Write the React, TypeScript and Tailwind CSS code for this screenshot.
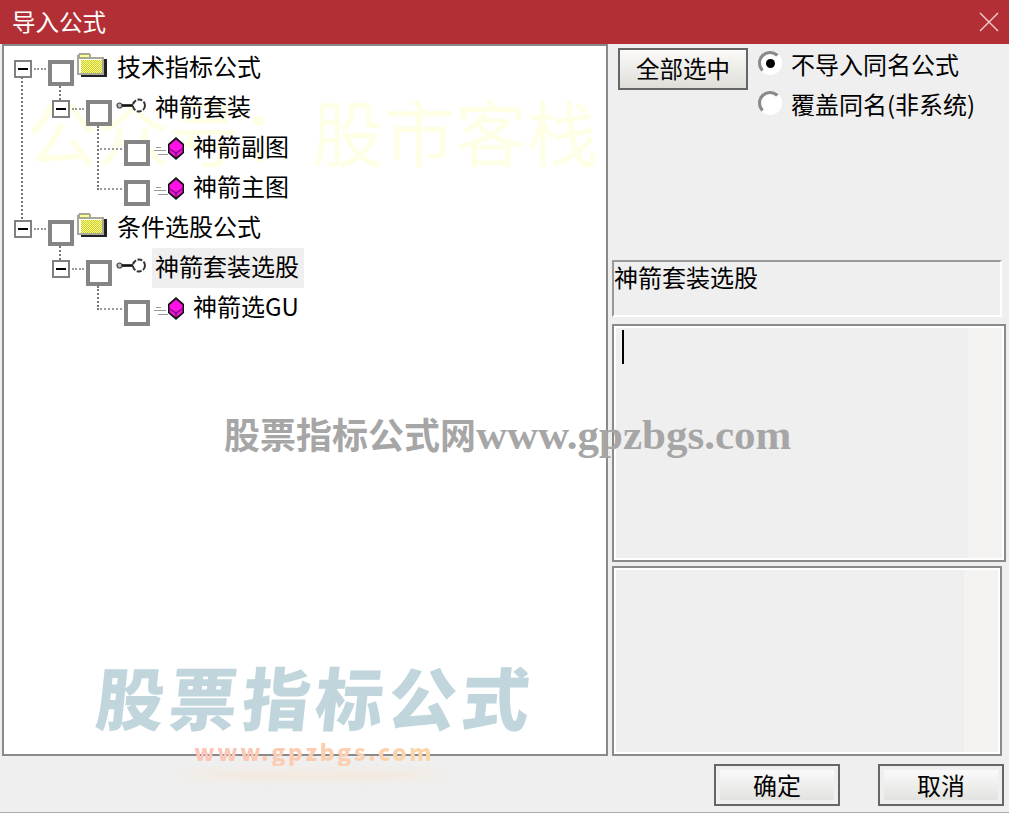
const cjk = { fontFamily: '"Noto Sans CJK SC", "Liberation Sans", sans-serif' };

function Folder() {
  return (
    <svg width="30" height="26" viewBox="0 0 30 26" shapeRendering="crispEdges" className="shrink-0">
      <defs>
        <pattern id="chk" width="2" height="2" patternUnits="userSpaceOnUse">
          <rect width="2" height="2" fill="#ffff66" />
          <rect width="1" height="1" fill="#c8c850" />
          <rect x="1" y="1" width="1" height="1" fill="#c8c850" />
        </pattern>
      </defs>
      <path d="M4 25h26V7h-3v15H4z" fill="#222" />
      <path d="M0 23V3l2-2h10l2 2v2h13v18z" fill="#a8a898" />
      <path d="M2 21V7h23v14z" fill="#fff" />
      <path d="M4 8h21v13H4z" fill="url(#chk)" />
      <path d="M3 3h9v2H3z" fill="#ffff90" />
    </svg>
  );
}

function KeyIcon() {
  return (
    <svg width="30" height="16" viewBox="0 0 30 16" className="shrink-0">
      <circle cx="3.5" cy="7.5" r="2.5" fill="#bbb" stroke="#444" strokeWidth="1.2" />
      <rect x="6" y="6.2" width="11" height="2.6" fill="#111" />
      <circle cx="23" cy="7.5" r="6" fill="#fff" stroke="#333" strokeWidth="2" strokeDasharray="5 1.5" />
    </svg>
  );
}

function DocIcon() {
  return (
    <svg width="32" height="24" viewBox="0 0 32 24" className="shrink-0">
      <path d="M2 10h5v1H2zM0 13h12v1H0zM4 17h10v1H4z" fill="#999" shapeRendering="crispEdges" />
      <path d="M22 0l8 7v9l-8 7-8-7V7z" fill="#111" />
      <path d="M22 2.5l6.5 5.5v7L22 20.5 15.500 15V8z" fill="#ff10e8" />
      <path d="M16 12l6 4 6-4M22 16v4" stroke="#70106a" strokeWidth="1.5" fill="none" />
    </svg>
  );
}

function Expander() {
  return (
    <span className="flex h-[18px] w-[18px] shrink-0 items-center justify-center border-2 border-[#808080] bg-white">
      <span className="h-[2px] w-[10px] bg-black" />
    </span>
  );
}

function Check() {
  return <span className="block h-[26px] w-[26px] shrink-0 border-4 border-[#858585] bg-white" />;
}

type RowProps = {
  kind: 'root' | 'group' | 'leaf';
  label: string;
  selected?: boolean;
  children?: React.ReactNode;
};

function TreeRow({ kind, label, selected, children }: RowProps) {
  return (
    <div className="relative h-10">
      {children}
      {kind === 'root' && (
        <div className="flex items-start pl-[10px]">
          <span className="mt-[13px]"><Expander /></span>
          <span className="mt-[13px] ml-[16px]"><Check /></span>
          <span className="mt-[5px] ml-[3px]"><Folder /></span>
          <span className="ml-[10px] text-[24px] leading-[38px] text-black">{label}</span>
        </div>
      )}
      {kind === 'group' && (
        <div className="flex items-start pl-[48px]">
          <span className="mt-[13px]"><Expander /></span>
          <span className="mt-[13px] ml-[16px]"><Check /></span>
          <span className="mt-[11px] ml-[4px]"><KeyIcon /></span>
          <span className={`mt-px ml-[6px] pr-[5px] pb-1 pl-[3px] text-[24px] leading-[36px] text-black ${selected ? 'bg-[#efefef]' : ''}`}>{label}</span>
        </div>
      )}
      {kind === 'leaf' && (
        <div className="flex items-start pl-[120px]">
          <span className="mt-[13px]"><Check /></span>
          <span className="mt-[10px] ml-[4px]"><DocIcon /></span>
          <span className="ml-[7px] text-[24px] leading-[38px] text-black">{label}</span>
        </div>
      )}
    </div>
  );
}

const dotV = 'absolute w-0 border-l-2 border-dotted border-[#777]';
const dotH = 'absolute h-0 border-t-2 border-dotted border-[#999]';

function Radio({ checked, label }: { checked?: boolean; label: string }) {
  return (
    <div className="flex h-10 items-center">
      <span className="-mt-[2px] flex h-[24px] w-[24px] items-center justify-center rounded-full border-[3px] border-t-[#8a8a8a] border-l-[#8a8a8a] border-r-white border-b-white bg-white">
        {checked && <span className="h-[9px] w-[9px] rounded-full bg-black" />}
      </span>
      <span className="ml-[9px] text-[24px] whitespace-nowrap text-black">{label}</span>
    </div>
  );
}

function DlgButton({ label }: { label: string }) {
  return (
    <button className="h-[42px] w-[126px] border-2 border-[#666] bg-[#efefef] p-1 text-black">
      <span className="flex h-full w-full items-center justify-center bg-linear-to-b from-[#fafafa] to-[#e2e2e0] pb-px text-[24px] leading-none">
        {label}
      </span>
    </button>
  );
}

function Memo({ inner, children }: { inner: string; children?: React.ReactNode }) {
  return (
    <div className="flex h-full w-full border-2 border-[#8a8a8a]">
      <div className="flex h-full w-full border-2 border-white bg-[#f4f3f1]">
        <div className={`h-full bg-[#efefef] ${inner}`}>{children}</div>
      </div>
    </div>
  );
}

export default function App() {
  return (
    <div style={cjk} className="relative flex h-[813px] w-[1009px] flex-col overflow-hidden border-b border-[#aaa] bg-[#efefef]">
      {/* barra de titulo */}
      <div className="flex h-[44px] shrink-0 items-center justify-between bg-[#b23035] pr-[10px] pl-[12px]">
        <span className="text-[23.5px] leading-none text-white">导入公式</span>
        <svg width="20" height="20" viewBox="0 0 20 20">
          <path d="M1 1l18 18M19 1L1 19" stroke="#f0d4d4" strokeWidth="1.3" fill="none" />
        </svg>
      </div>

      <div className="flex h-[712px] shrink-0 pl-[2px]">
        {/* arbol */}
        <div className="relative h-full w-[606px] border-2 border-[#8a8a8a] bg-white pt-px">
          <div className="pointer-events-none absolute top-[44px] left-[22px] text-[71.500px] leading-[80px] whitespace-nowrap text-[#ffffe6]">
            公众号：股市客栈
          </div>
          <div className="relative">
            <TreeRow kind="root" label="技术指标公式">
              <span className={`${dotV} top-[30px] left-[17px] h-[142px]`} />
              <span className={`${dotH} top-[21px] left-[30px] w-[12px]`} />
            </TreeRow>
            <TreeRow kind="group" label="神箭套装">
              <span className={`${dotV} top-[-1px] left-[55px] h-[14px]`} />
              <span className={`${dotH} top-[21px] left-[68px] w-[12px]`} />
            </TreeRow>
            <TreeRow kind="leaf" label="神箭副图">
              <span className={`${dotV} top-[-1px] left-[93px] h-[64px]`} />
              <span className={`${dotH} top-[21px] left-[96px] w-[22px]`} />
            </TreeRow>
            <TreeRow kind="leaf" label="神箭主图">
              <span className={`${dotH} top-[21px] left-[96px] w-[22px]`} />
            </TreeRow>
            <TreeRow kind="root" label="条件选股公式">
              <span className={`${dotH} top-[21px] left-[30px] w-[12px]`} />
            </TreeRow>
            <TreeRow kind="group" label="神箭套装选股" selected>
              <span className={`${dotV} top-[-1px] left-[55px] h-[14px]`} />
              <span className={`${dotH} top-[21px] left-[68px] w-[12px]`} />
            </TreeRow>
            <TreeRow kind="leaf" label="神箭选GU">
              <span className={`${dotV} top-[-1px] left-[93px] h-[24px]`} />
              <span className={`${dotH} top-[21px] left-[96px] w-[22px]`} />
            </TreeRow>
          </div>
        </div>

        {/* panel derecho */}
        <div className="ml-[4px] flex h-full w-[394px] flex-col">
          <div className="flex h-[216px] shrink-0 items-start pt-1 pl-[6px]">
            <button className="h-[42px] w-[130px] border-2 border-[#666] bg-linear-to-b from-[#fbfaf8] to-[#dfded9] text-[23.5px] leading-none text-black">
              全部选中
            </button>
            <div className="-mt-[4px] ml-[10px] flex flex-col">
              <Radio checked label="不导入同名公式" />
              <Radio label="覆盖同名(非系统)" />
            </div>
          </div>
          <div className="h-[57px] w-[390px] shrink-0 border-2 border-t-[#999] border-l-[#999] border-r-white border-b-white text-[24px] leading-[30px] text-black">
            神箭套装选股
          </div>
          <div className="mt-[7px] h-[238px] shrink-0">
            <Memo inner="w-[352px] pt-[2px] pl-[6px]">
              <span className="block h-[34px] w-[2px] bg-black" />
            </Memo>
          </div>
          <div className="mt-[4px] h-[190px] w-[390px] shrink-0">
            <Memo inner="w-[348px]" />
          </div>
        </div>
      </div>

      {/* botones */}
      <div className="flex flex-1 items-start justify-end gap-[38px] pt-[8px] pr-[5px]">
        <DlgButton label="确定" />
        <DlgButton label="取消" />
      </div>

      {/* marcas de agua */}
      <div
        style={{ fontFamily: '"Liberation Serif", "Noto Sans CJK SC", serif' }}
        className="pointer-events-none absolute top-[410px] left-[224px] flex items-baseline text-[36px] leading-[50px] font-bold whitespace-nowrap text-[#a6a6a6]"
      >
        股票指标公式网<span className="text-[43px] leading-[50px]">www.gpzbgs.com</span>
      </div>
      <div className="pointer-events-none absolute top-[648px] left-[97px] -skew-x-6 text-[68px] leading-[96px] font-black tracking-[5px] whitespace-nowrap text-[#c0d6dc]">
        股票指标公式
      </div>
      <div className="pointer-events-none absolute top-[736px] left-[194px] bg-linear-to-r from-[#fdc4b8] to-[#fad6a8] bg-clip-text text-[23px] leading-[30px] font-black tracking-[2.4px] whitespace-nowrap text-transparent">
        www.gpzbgs.com
      </div>
      <div className="pointer-events-none absolute top-[770px] left-[180px] h-[10px] w-[270px] rounded-[50%] bg-[#f6e6d4] opacity-70 blur-[5px]" />
    </div>
  );
}
